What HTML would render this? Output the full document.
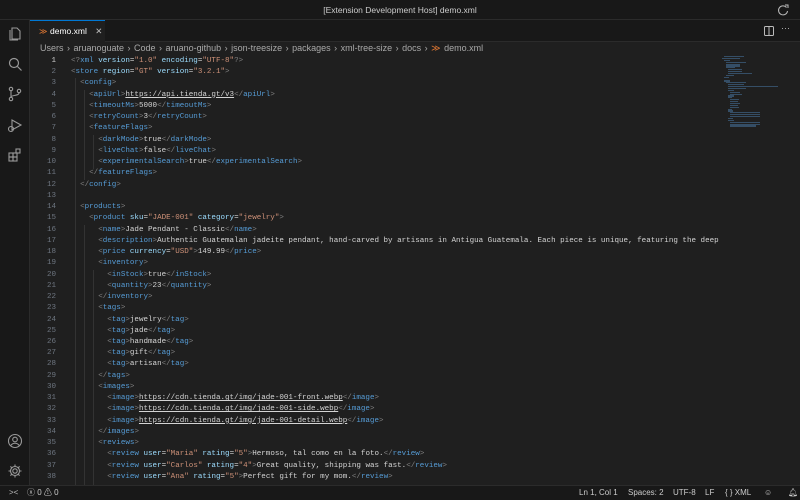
<!DOCTYPE html>
<html><head><meta charset="utf-8"><style>
*{margin:0;padding:0;box-sizing:border-box}
body{width:800px;height:500px;background:#1f1f1f;overflow:hidden;font-family:"Liberation Sans",sans-serif;color:#ccc;position:relative}
.title{position:absolute;left:0;top:0;width:800px;height:20px;background:#181818;border-bottom:1px solid #2b2b2b;text-align:center;font-size:8.5px;line-height:20px;color:#ccc}
.act{position:absolute;left:0;top:20px;width:30px;height:465px;background:#181818;border-right:1px solid #2b2b2b}
.tabs{position:absolute;left:30px;top:20px;width:770px;height:22px;background:#181818;border-bottom:1px solid #2b2b2b}
.tab{position:absolute;left:0;top:0;width:75px;height:22px;background:#1f1f1f;border-top:1px solid #0078d4;font-size:8.5px;line-height:21px;color:#fff;padding-left:20px}
.tab .ic{position:absolute;left:9px;top:0;color:#e37933;font-size:8px}
.crumbs{position:absolute;left:40px;top:42px;font-size:9px;color:#a9a9a9;line-height:12px;white-space:nowrap;word-spacing:1px}
.code{position:absolute;left:30px;top:56px;width:690px;height:429px;overflow:hidden;font-family:"Liberation Mono",monospace;font-size:7.55px;line-height:11.24px;white-space:pre}
.ln{position:absolute;left:0;width:26px;text-align:right;color:#6e7681}
.ln.cur{color:#ccc}
.l{position:absolute;left:41px;color:#d4d4d4}
.t{color:#569cd6}.a{color:#9cdcfe}.s{color:#ce9178}.p{color:#808080}.u{text-decoration:underline}
.status{position:absolute;left:0;top:485px;width:800px;height:15px;background:#181818;border-top:1px solid #2b2b2b;font-size:8px;line-height:14px;color:#ccc}
.status span{position:absolute;top:0}
.mini{position:absolute;left:722px;top:56px;width:55px;height:100px}
.mini div{height:1.2px;margin-bottom:0.7px;background:#3b5a78;opacity:.8}
.guide{position:absolute;width:1px;background:#333}
</style></head><body>
<div class="title">[Extension Development Host] demo.xml</div>
<svg style="position:absolute;left:776px;top:3px" width="14" height="14" viewBox="0 0 14 14"><path d="M10.5 4.5A4.5 4.5 0 1 0 11.5 8" fill="none" stroke="#bbb" stroke-width="1"/><path d="M9 2h3v3" fill="none" stroke="#bbb" stroke-width="1"/></svg>
<div class="act">
<svg style="position:absolute;left:7px;top:6px" width="16" height="16" viewBox="0 0 16 16" fill="none" stroke="#999" stroke-width="1.1"><path d="M5 2h5l3 3v8H5z"/><path d="M3 4v10h8"/></svg>
<svg style="position:absolute;left:7px;top:36px" width="16" height="16" viewBox="0 0 16 16" fill="none" stroke="#999" stroke-width="1.2"><circle cx="7" cy="7" r="4.5"/><path d="M10.5 10.5l4 4"/></svg>
<svg style="position:absolute;left:7px;top:66px" width="16" height="16" viewBox="0 0 16 16" fill="none" stroke="#999" stroke-width="1.1"><circle cx="4" cy="3" r="1.7"/><circle cx="4" cy="13" r="1.7"/><circle cx="12" cy="5" r="1.7"/><path d="M4 5v6M12 7c0 3-8 2-8 4"/></svg>
<svg style="position:absolute;left:7px;top:97px" width="16" height="16" viewBox="0 0 16 16" fill="none" stroke="#999" stroke-width="1.1"><path d="M5 3l9 5-9 5z"/><circle cx="4" cy="12" r="2.5"/></svg>
<svg style="position:absolute;left:7px;top:127px" width="16" height="16" viewBox="0 0 16 16" fill="none" stroke="#999" stroke-width="1.1"><rect x="2" y="6" width="4" height="4"/><rect x="6" y="6" width="4" height="4"/><rect x="2" y="10" width="4" height="4"/><rect x="6" y="10" width="4" height="4"/><rect x="9" y="2" width="4" height="4"/></svg>
<svg style="position:absolute;left:7px;top:413px" width="16" height="16" viewBox="0 0 16 16" fill="none" stroke="#999" stroke-width="1.1"><circle cx="8" cy="8" r="6.5"/><circle cx="8" cy="6.5" r="2.3"/><path d="M3.8 12.5c2-3 6.4-3 8.4 0"/></svg>
<svg style="position:absolute;left:7px;top:443px" width="16" height="16" viewBox="0 0 16 16" fill="none" stroke="#999" stroke-width="1.1"><circle cx="8" cy="8" r="2.2"/><path d="M8 1.5v2M8 12.5v2M1.5 8h2M12.5 8h2M3.4 3.4l1.4 1.4M11.2 11.2l1.4 1.4M3.4 12.6l1.4-1.4M11.2 4.8l1.4-1.4"/><circle cx="8" cy="8" r="4.5"/></svg>
</div>
<div class="tabs"><div class="tab"><span class="ic">≫</span>demo.xml <span style="color:#bbb;margin-left:6px">✕</span></div>
<svg style="position:absolute;left:734px;top:6px" width="10" height="10" viewBox="0 0 10 10" fill="none" stroke="#bbb" stroke-width="1"><rect x="0.5" y="0.5" width="9" height="9" rx="1"/><path d="M5 0.5v9"/></svg>
<span style="position:absolute;left:751px;top:3px;font-size:9px;color:#bbb">···</span></div>
<div class="crumbs">Users › aruanoguate › Code › aruano-github › json-treesize › packages › xml-tree-size › docs › <span style="color:#e37933">≫</span> demo.xml</div>
<div class="mini"><div style="width:20px;margin-left:2px"></div><div style="width:18px"></div><div style="width:6px;margin-left:2px"></div><div style="width:20px;margin-left:4px"></div><div style="width:14px;margin-left:4px"></div><div style="width:14px;margin-left:4px"></div><div style="width:9px;margin-left:4px"></div><div style="width:14px;margin-left:6px"></div><div style="width:14px;margin-left:6px"></div><div style="width:24px;margin-left:6px"></div><div style="width:8px;margin-left:4px"></div><div style="width:5px;margin-left:2px"></div><div style="width:0"></div><div style="width:6px;margin-left:2px"></div><div style="width:20px;margin-left:4px"></div><div style="width:16px;margin-left:6px"></div><div style="width:50px;margin-left:6px"></div><div style="width:18px;margin-left:6px"></div><div style="width:6px;margin-left:6px"></div><div style="width:10px;margin-left:8px"></div><div style="width:12px;margin-left:8px"></div><div style="width:6px;margin-left:6px"></div><div style="width:4px;margin-left:6px"></div><div style="width:9px;margin-left:8px"></div><div style="width:8px;margin-left:8px"></div><div style="width:10px;margin-left:8px"></div><div style="width:8px;margin-left:8px"></div><div style="width:9px;margin-left:8px"></div><div style="width:4px;margin-left:6px"></div><div style="width:5px;margin-left:6px"></div><div style="width:30px;margin-left:8px"></div><div style="width:30px;margin-left:8px"></div><div style="width:30px;margin-left:8px"></div><div style="width:5px;margin-left:6px"></div><div style="width:6px;margin-left:6px"></div><div style="width:30px;margin-left:8px"></div><div style="width:30px;margin-left:8px"></div><div style="width:26px;margin-left:8px"></div></div>
<div class="code">
<div class="guide" style="left:45px;top:22px;height:407px"></div>
<div class="guide" style="left:54px;top:34px;height:90px"></div>
<div class="guide" style="left:54px;top:169px;height:260px"></div>
<div class="guide" style="left:63px;top:79px;height:34px"></div>
<div class="guide" style="left:63px;top:214px;height:215px"></div>
<div class="ln cur" style="top:0">1</div><div class="l" style="top:0"><span class="p">&lt;?</span><span class="t">xml</span> <span class="a">version</span>=<span class="s">"1.0"</span> <span class="a">encoding</span>=<span class="s">"UTF-8"</span><span class="p">?&gt;</span></div>
<div class="ln" style="top:11.24px">2</div><div class="l" style="top:11.24px"><span class="p">&lt;</span><span class="t">store</span> <span class="a">region</span>=<span class="s">"GT"</span> <span class="a">version</span>=<span class="s">"3.2.1"</span><span class="p">&gt;</span></div>
<div class="ln" style="top:22.48px">3</div><div class="l" style="top:22.48px">  <span class="p">&lt;</span><span class="t">config</span><span class="p">&gt;</span></div>
<div class="ln" style="top:33.72px">4</div><div class="l" style="top:33.72px">    <span class="p">&lt;</span><span class="t">apiUrl</span><span class="p">&gt;</span><span class="u">https://api.tienda.gt/v3</span><span class="p">&lt;/</span><span class="t">apiUrl</span><span class="p">&gt;</span></div>
<div class="ln" style="top:44.96px">5</div><div class="l" style="top:44.96px">    <span class="p">&lt;</span><span class="t">timeoutMs</span><span class="p">&gt;</span>5000<span class="p">&lt;/</span><span class="t">timeoutMs</span><span class="p">&gt;</span></div>
<div class="ln" style="top:56.2px">6</div><div class="l" style="top:56.2px">    <span class="p">&lt;</span><span class="t">retryCount</span><span class="p">&gt;</span>3<span class="p">&lt;/</span><span class="t">retryCount</span><span class="p">&gt;</span></div>
<div class="ln" style="top:67.44px">7</div><div class="l" style="top:67.44px">    <span class="p">&lt;</span><span class="t">featureFlags</span><span class="p">&gt;</span></div>
<div class="ln" style="top:78.68px">8</div><div class="l" style="top:78.68px">      <span class="p">&lt;</span><span class="t">darkMode</span><span class="p">&gt;</span>true<span class="p">&lt;/</span><span class="t">darkMode</span><span class="p">&gt;</span></div>
<div class="ln" style="top:89.92px">9</div><div class="l" style="top:89.92px">      <span class="p">&lt;</span><span class="t">liveChat</span><span class="p">&gt;</span>false<span class="p">&lt;/</span><span class="t">liveChat</span><span class="p">&gt;</span></div>
<div class="ln" style="top:101.16px">10</div><div class="l" style="top:101.16px">      <span class="p">&lt;</span><span class="t">experimentalSearch</span><span class="p">&gt;</span>true<span class="p">&lt;/</span><span class="t">experimentalSearch</span><span class="p">&gt;</span></div>
<div class="ln" style="top:112.4px">11</div><div class="l" style="top:112.4px">    <span class="p">&lt;/</span><span class="t">featureFlags</span><span class="p">&gt;</span></div>
<div class="ln" style="top:123.64px">12</div><div class="l" style="top:123.64px">  <span class="p">&lt;/</span><span class="t">config</span><span class="p">&gt;</span></div>
<div class="ln" style="top:134.88px">13</div>
<div class="ln" style="top:146.12px">14</div><div class="l" style="top:146.12px">  <span class="p">&lt;</span><span class="t">products</span><span class="p">&gt;</span></div>
<div class="ln" style="top:157.36px">15</div><div class="l" style="top:157.36px">    <span class="p">&lt;</span><span class="t">product</span> <span class="a">sku</span>=<span class="s">"JADE-001"</span> <span class="a">category</span>=<span class="s">"jewelry"</span><span class="p">&gt;</span></div>
<div class="ln" style="top:168.6px">16</div><div class="l" style="top:168.6px">      <span class="p">&lt;</span><span class="t">name</span><span class="p">&gt;</span>Jade Pendant - Classic<span class="p">&lt;/</span><span class="t">name</span><span class="p">&gt;</span></div>
<div class="ln" style="top:179.84px">17</div><div class="l" style="top:179.84px">      <span class="p">&lt;</span><span class="t">description</span><span class="p">&gt;</span>Authentic Guatemalan jadeite pendant, hand-carved by artisans in Antigua Guatemala. Each piece is unique, featuring the deep</div>
<div class="ln" style="top:191.08px">18</div><div class="l" style="top:191.08px">      <span class="p">&lt;</span><span class="t">price</span> <span class="a">currency</span>=<span class="s">"USD"</span><span class="p">&gt;</span>149.99<span class="p">&lt;/</span><span class="t">price</span><span class="p">&gt;</span></div>
<div class="ln" style="top:202.32px">19</div><div class="l" style="top:202.32px">      <span class="p">&lt;</span><span class="t">inventory</span><span class="p">&gt;</span></div>
<div class="ln" style="top:213.56px">20</div><div class="l" style="top:213.56px">        <span class="p">&lt;</span><span class="t">inStock</span><span class="p">&gt;</span>true<span class="p">&lt;/</span><span class="t">inStock</span><span class="p">&gt;</span></div>
<div class="ln" style="top:224.8px">21</div><div class="l" style="top:224.8px">        <span class="p">&lt;</span><span class="t">quantity</span><span class="p">&gt;</span>23<span class="p">&lt;/</span><span class="t">quantity</span><span class="p">&gt;</span></div>
<div class="ln" style="top:236.04px">22</div><div class="l" style="top:236.04px">      <span class="p">&lt;/</span><span class="t">inventory</span><span class="p">&gt;</span></div>
<div class="ln" style="top:247.28px">23</div><div class="l" style="top:247.28px">      <span class="p">&lt;</span><span class="t">tags</span><span class="p">&gt;</span></div>
<div class="ln" style="top:258.52px">24</div><div class="l" style="top:258.52px">        <span class="p">&lt;</span><span class="t">tag</span><span class="p">&gt;</span>jewelry<span class="p">&lt;/</span><span class="t">tag</span><span class="p">&gt;</span></div>
<div class="ln" style="top:269.76px">25</div><div class="l" style="top:269.76px">        <span class="p">&lt;</span><span class="t">tag</span><span class="p">&gt;</span>jade<span class="p">&lt;/</span><span class="t">tag</span><span class="p">&gt;</span></div>
<div class="ln" style="top:281px">26</div><div class="l" style="top:281px">        <span class="p">&lt;</span><span class="t">tag</span><span class="p">&gt;</span>handmade<span class="p">&lt;/</span><span class="t">tag</span><span class="p">&gt;</span></div>
<div class="ln" style="top:292.24px">27</div><div class="l" style="top:292.24px">        <span class="p">&lt;</span><span class="t">tag</span><span class="p">&gt;</span>gift<span class="p">&lt;/</span><span class="t">tag</span><span class="p">&gt;</span></div>
<div class="ln" style="top:303.48px">28</div><div class="l" style="top:303.48px">        <span class="p">&lt;</span><span class="t">tag</span><span class="p">&gt;</span>artisan<span class="p">&lt;/</span><span class="t">tag</span><span class="p">&gt;</span></div>
<div class="ln" style="top:314.72px">29</div><div class="l" style="top:314.72px">      <span class="p">&lt;/</span><span class="t">tags</span><span class="p">&gt;</span></div>
<div class="ln" style="top:325.96px">30</div><div class="l" style="top:325.96px">      <span class="p">&lt;</span><span class="t">images</span><span class="p">&gt;</span></div>
<div class="ln" style="top:337.2px">31</div><div class="l" style="top:337.2px">        <span class="p">&lt;</span><span class="t">image</span><span class="p">&gt;</span><span class="u">https://cdn.tienda.gt/img/jade-001-front.webp</span><span class="p">&lt;/</span><span class="t">image</span><span class="p">&gt;</span></div>
<div class="ln" style="top:348.44px">32</div><div class="l" style="top:348.44px">        <span class="p">&lt;</span><span class="t">image</span><span class="p">&gt;</span><span class="u">https://cdn.tienda.gt/img/jade-001-side.webp</span><span class="p">&lt;/</span><span class="t">image</span><span class="p">&gt;</span></div>
<div class="ln" style="top:359.68px">33</div><div class="l" style="top:359.68px">        <span class="p">&lt;</span><span class="t">image</span><span class="p">&gt;</span><span class="u">https://cdn.tienda.gt/img/jade-001-detail.webp</span><span class="p">&lt;/</span><span class="t">image</span><span class="p">&gt;</span></div>
<div class="ln" style="top:370.92px">34</div><div class="l" style="top:370.92px">      <span class="p">&lt;/</span><span class="t">images</span><span class="p">&gt;</span></div>
<div class="ln" style="top:382.16px">35</div><div class="l" style="top:382.16px">      <span class="p">&lt;</span><span class="t">reviews</span><span class="p">&gt;</span></div>
<div class="ln" style="top:393.4px">36</div><div class="l" style="top:393.4px">        <span class="p">&lt;</span><span class="t">review</span> <span class="a">user</span>=<span class="s">"Maria"</span> <span class="a">rating</span>=<span class="s">"5"</span><span class="p">&gt;</span>Hermoso, tal como en la foto.<span class="p">&lt;/</span><span class="t">review</span><span class="p">&gt;</span></div>
<div class="ln" style="top:404.64px">37</div><div class="l" style="top:404.64px">        <span class="p">&lt;</span><span class="t">review</span> <span class="a">user</span>=<span class="s">"Carlos"</span> <span class="a">rating</span>=<span class="s">"4"</span><span class="p">&gt;</span>Great quality, shipping was fast.<span class="p">&lt;/</span><span class="t">review</span><span class="p">&gt;</span></div>
<div class="ln" style="top:415.88px">38</div><div class="l" style="top:415.88px">        <span class="p">&lt;</span><span class="t">review</span> <span class="a">user</span>=<span class="s">"Ana"</span> <span class="a">rating</span>=<span class="s">"5"</span><span class="p">&gt;</span>Perfect gift for my mom.<span class="p">&lt;/</span><span class="t">review</span><span class="p">&gt;</span></div>
</div>
<div class="status">
<span style="left:9px;color:#bbb">&gt;&lt;</span>
<span style="left:27px">ⓧ 0 ⚠ 0</span>
<span style="left:579px">Ln 1, Col 1</span>
<span style="left:628px">Spaces: 2</span>
<span style="left:673px">UTF-8</span>
<span style="left:705px">LF</span>
<span style="left:725px">{ } XML</span>
<span style="left:764px">☺</span>
<span style="left:788px">🔔︎</span>
</div>
</body></html>
